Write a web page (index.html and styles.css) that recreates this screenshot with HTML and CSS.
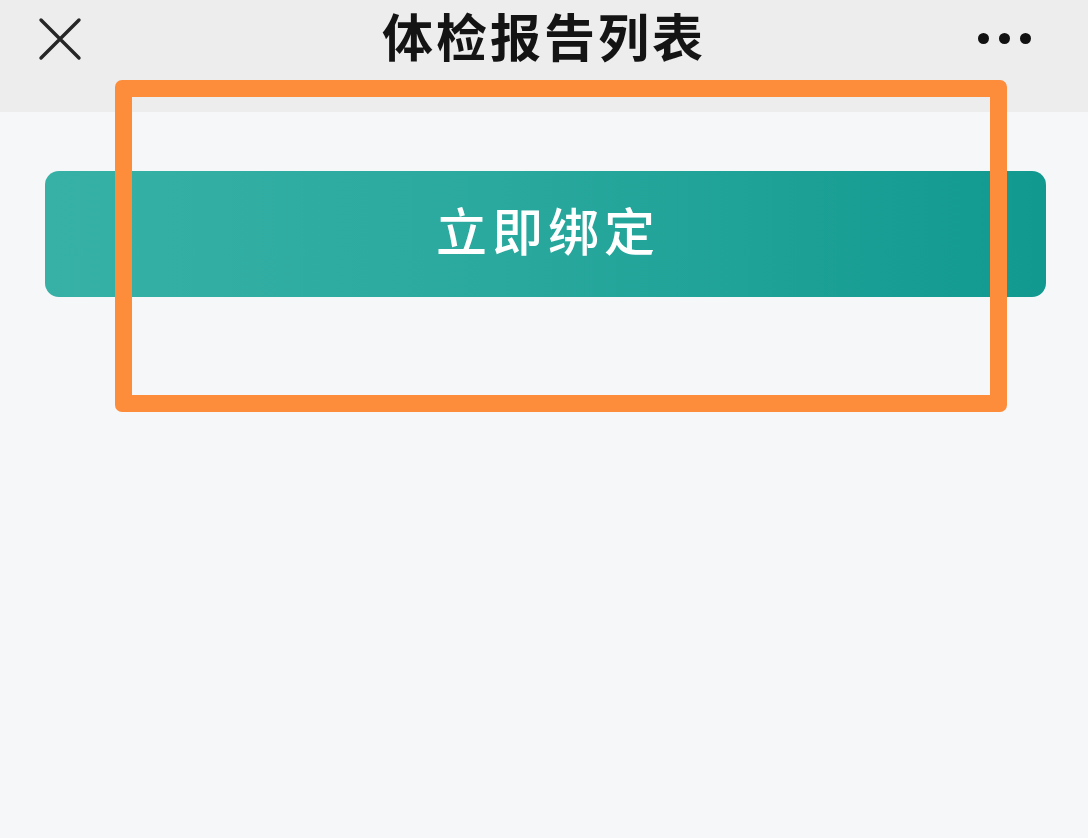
FILE: index.html
```html
<!DOCTYPE html>
<html lang="zh-CN">
<head>
  <meta charset="UTF-8" />
  <meta name="viewport" content="width=device-width, initial-scale=1.0" />
  <title>体检报告列表</title>
  <link rel="stylesheet" href="styles.css">
</head>
<body>
  <div class="page">
    <header class="nav">
      <div class="nav-close">
        <svg width="44" height="44" viewBox="0 0 44 44">
          <path d="M3 3 L41 41 M41 3 L3 41" stroke="#262626" stroke-width="3.4" stroke-linecap="round" fill="none" />
        </svg>
      </div>
      <h1 class="nav-title">体检报告列表</h1>
      <div class="nav-more">
        <span class="dot"></span>
        <span class="dot"></span>
        <span class="dot"></span>
      </div>
    </header>

    <main class="content">
      <button class="bind-btn">立即绑定</button>
    </main>

    <div class="highlight"></div>
  </div>
</body>
</html>
```

FILE: styles.css
```css
html, body {
  margin: 0;
  padding: 0;
}

body {
  font-family: "Noto Sans CJK SC", "Noto Sans", sans-serif;
  background: #f6f7f9;
  width: 1088px;
  height: 838px;
  overflow: hidden;
}

.page {
  position: relative;
  height: 838px;
}

.nav {
  height: 112px;
  background: #ededed;
  display: grid;
  grid-template-columns: 1fr auto 1fr;
  align-items: start;
  padding: 0 57px 0 38px;
  box-sizing: border-box;
}

.nav-close {
  width: 44px;
  height: 44px;
  margin-top: 17px;
}

.nav-title {
  margin: 0;
  margin-top: 3px;
  font-size: 51px;
  font-weight: 700;
  color: #141414;
  letter-spacing: 3px;
  line-height: 64px;
  padding-left: 19px;
}

.nav-more {
  justify-self: end;
  display: flex;
  gap: 10px;
  margin-top: 33px;
}

.dot {
  width: 11px;
  height: 11px;
  border-radius: 50%;
  background: #111;
}

.content {
  padding: 59px 42px 0 45px;
}

.bind-btn {
  display: block;
  width: 100%;
  height: 126px;
  border: none;
  border-radius: 14px;
  background: linear-gradient(to right, #37b1a6, #2aa99e 45%, #119990);
  color: #fff;
  font-family: "Noto Sans CJK SC", sans-serif;
  font-size: 51px;
  font-weight: 500;
  letter-spacing: 5px;
  padding: 0 0 10px 5px;
}

/* orange annotation box drawn over the page */
.highlight {
  position: absolute;
  left: 115px;
  top: 80px;
  width: 892px;
  height: 332px;
  box-sizing: border-box;
  border: 17px solid #fd8c3b;
  border-radius: 7px;
}
```
